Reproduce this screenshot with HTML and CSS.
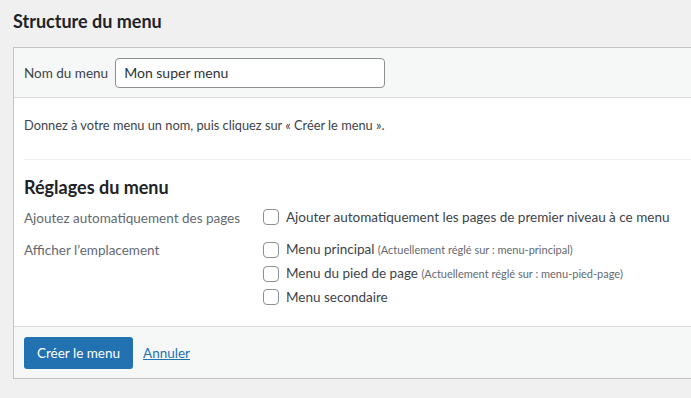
FILE: index.html
```html
<!DOCTYPE html>
<html lang="fr">

<head>
    <meta charset="UTF-8">
    <meta name="viewport" content="width=device-width, initial-scale=1.0">
    <title>Menus</title>
    <link rel="stylesheet" href="styles.css">
</head>

<body>
    <h2 class="title">Structure du menu</h2>

    <div class="panel">
        <!-- Nom du menu -->
        <div class="panel-header">
            <label class="name-label" for="menu-name">Nom du menu</label>
            <input id="menu-name" class="name-input" type="text" value="Mon super menu">
        </div>

        <div class="panel-body">
            <p class="description">Donnez à votre menu un nom, puis cliquez sur « Créer le menu ».</p>

            <div class="separator"></div>

            <h3 class="settings-title">Réglages du menu</h3>

            <div class="setting-row first">
                <div class="setting-label">Ajoutez automatiquement des pages</div>
                <div class="setting-options">
                    <label class="option"><span class="checkbox"></span><span>Ajouter automatiquement les pages de premier niveau à ce menu</span></label>
                </div>
            </div>

            <div class="setting-row">
                <div class="setting-label">Afficher l’emplacement</div>
                <div class="setting-options">
                    <label class="option"><span class="checkbox"></span><span>Menu principal <span class="note">(Actuellement réglé sur : menu-principal)</span></span></label>
                    <label class="option"><span class="checkbox"></span><span>Menu du pied de page <span class="note">(Actuellement réglé sur : menu-pied-page)</span></span></label>
                    <label class="option"><span class="checkbox"></span><span>Menu secondaire</span></label>
                </div>
            </div>
        </div>

        <div class="panel-footer">
            <button class="button-primary">Créer le menu</button>
            <a href="#" class="cancel">Annuler</a>
        </div>
    </div>
</body>

</html>
```

FILE: styles.css
```css
body {
    margin: 0;
    padding: 0;
    background-color: #f0f0f1;
    font-family: "Lato", "Noto Sans", sans-serif;
    font-size: 13.5px;
    color: #3c434a;
    overflow: hidden;
}

.title {
    margin: 0 0 14px;
    padding: 9px 13px 0;
    font-size: 18px;
    line-height: 24px;
    font-weight: 700;
    color: #1d2327;
}

/* Boite principale */
.panel {
    margin-left: 13px;
    margin-right: -20px;
    border: 1px solid #c3c4c7;
    background-color: #fff;
}

.panel-header {
    display: flex;
    align-items: center;
    gap: 7px;
    height: 49px;
    padding: 0 10px;
    background-color: #f6f7f7;
    border-bottom: 1px solid #dcdcde;
}

.name-label {
    color: #3c434a;
}

.name-input {
    box-sizing: border-box;
    width: 270px;
    height: 30px;
    padding: 0 8px;
    border: 1px solid #8c8f94;
    border-radius: 4px;
    font-family: inherit;
    font-size: 14px;
    color: #2c3338;
    background-color: #fff;
}

.panel-body {
    padding: 18px 10px 21px;
}

.description {
    margin: 0;
    font-size: 12.8px;
    line-height: 18px;
    color: #3c434a;
}

.separator {
    margin-top: 25px;
    border-top: 1px solid #f0f0f1;
}

.settings-title {
    margin: 16px 0 0;
    font-size: 18px;
    line-height: 22px;
    font-weight: 700;
    color: #1d2327;
}

.setting-row {
    display: grid;
    grid-template-columns: 239px 1fr;
    margin-top: 14px;
}

.setting-row.first {
    margin-top: 11px;
}

.setting-label {
    color: #646970;
    line-height: 18px;
}

.setting-options {
    display: flex;
    flex-direction: column;
    gap: 7px;
}

.option {
    display: flex;
    align-items: center;
    gap: 7px;
    line-height: 16px;
    white-space: nowrap;
}

.option .note {
    font-size: 11px;
    color: #646970;
}

.checkbox {
    box-sizing: border-box;
    flex: none;
    width: 16px;
    height: 16px;
    border: 1px solid #8c8f94;
    border-radius: 4px;
    background-color: #fff;
}

.panel-footer {
    display: flex;
    align-items: center;
    gap: 10px;
    padding: 10px 10px 9px;
    background-color: #f6f7f7;
    border-top: 1px solid #dcdcde;
}

.button-primary {
    height: 32px;
    padding: 0 13px;
    border: none;
    border-radius: 3px;
    background-color: #2271b1;
    color: #fff;
    font-family: inherit;
    font-size: 13.5px;
    cursor: pointer;
}

.cancel {
    color: #2271b1;
    text-decoration: underline;
}
```
